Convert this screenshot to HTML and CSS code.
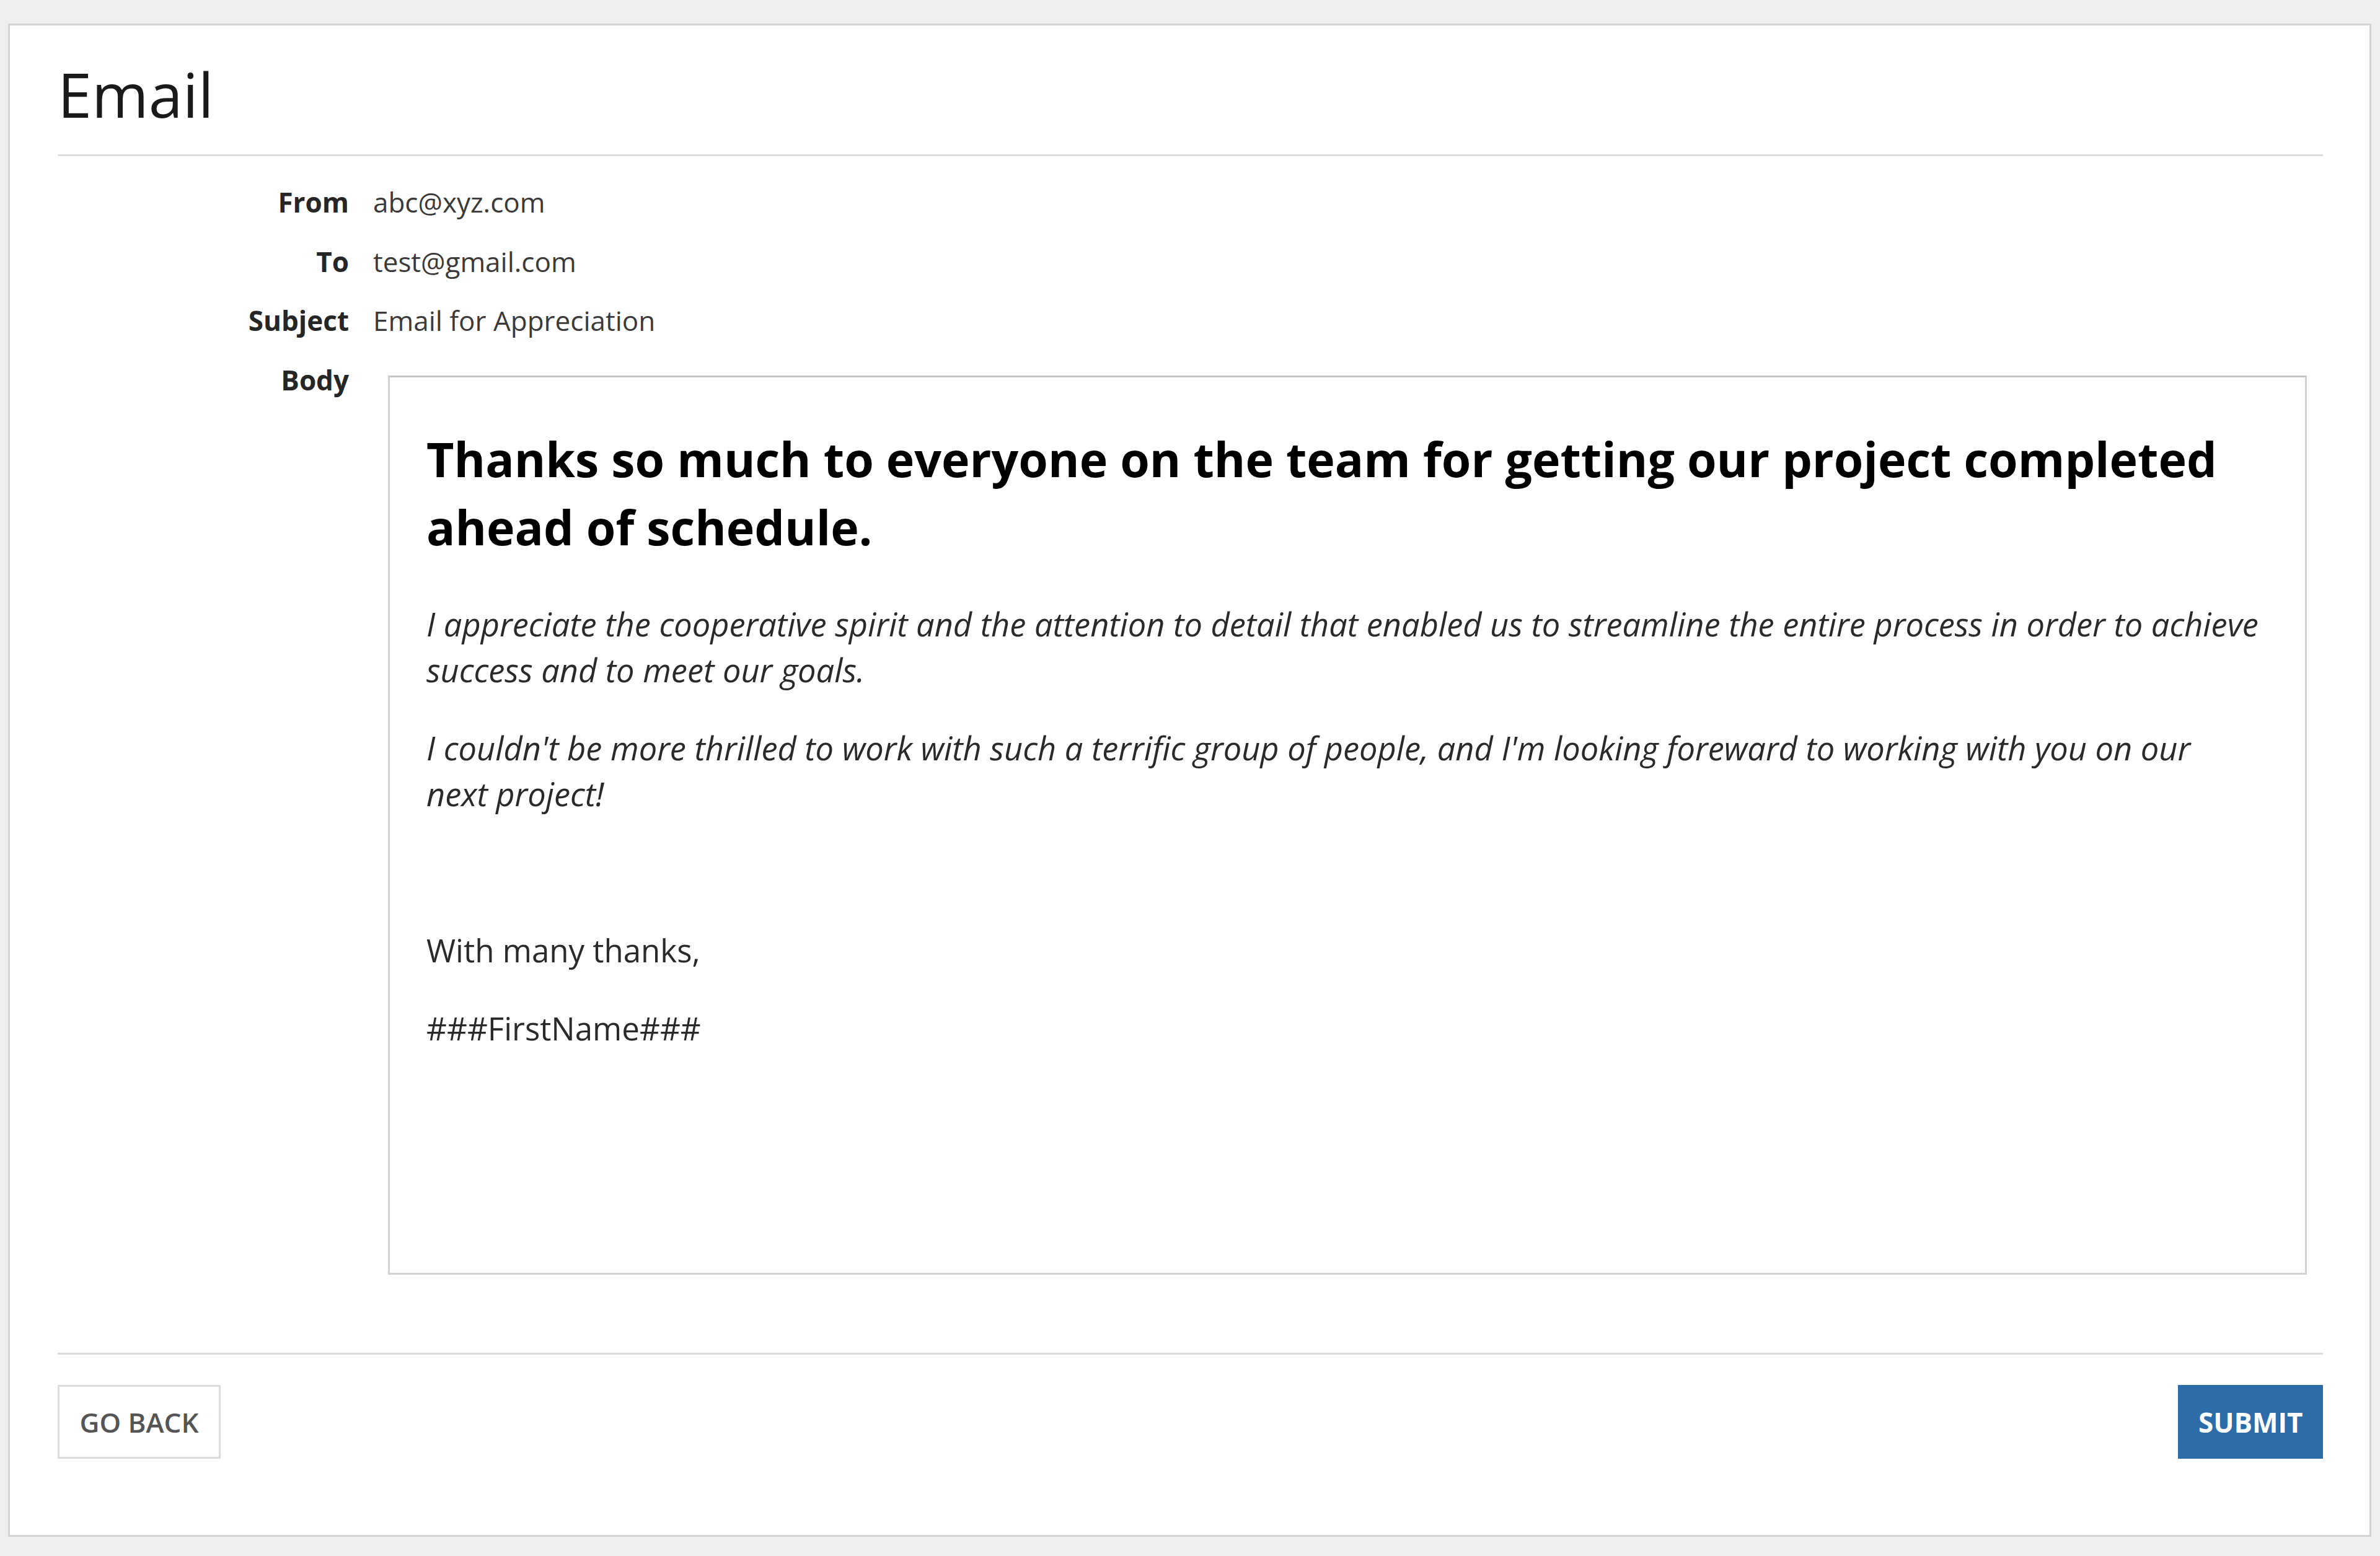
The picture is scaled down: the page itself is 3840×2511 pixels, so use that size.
FILE: index.html
```html
<!DOCTYPE html>
<html lang="en">
<head>
<meta charset="utf-8">
<title>Email</title>
<link rel="stylesheet" href="styles.css">
</head>
<body>
<main class="card">
  <header class="card-header">
    <h1 class="title">Email</h1>
  </header>
  <section class="form">
    <div class="row">
      <div class="label">From</div>
      <div class="value">abc@xyz.com</div>
    </div>
    <div class="row">
      <div class="label">To</div>
      <div class="value">test@gmail.com</div>
    </div>
    <div class="row">
      <div class="label">Subject</div>
      <div class="value">Email for Appreciation</div>
    </div>
    <div class="row row-body">
      <div class="label">Body</div>
      <div class="editor">
        <h2 class="mail-heading">Thanks so much to everyone on the team for getting our project completed ahead of schedule.</h2>
        <p class="mail-em">I appreciate the cooperative spirit and the attention to detail that enabled us to streamline the entire process in order to achieve success and to meet our goals.</p>
        <p class="mail-em">I couldn't be more thrilled to work with such a terrific group of people, and I'm looking foreward to working with you on our next&nbsp;project!</p>
        <p class="mail-p">&nbsp;</p>
        <p class="mail-p">With many thanks,</p>
        <p class="mail-p">###FirstName###</p>
      </div>
    </div>
  </section>
  <footer class="card-footer">
    <button class="btn btn-default" type="button">GO BACK</button>
    <button class="btn btn-primary" type="button">SUBMIT</button>
  </footer>
</main>
</body>
</html>
```

FILE: styles.css
```css
* { box-sizing: border-box; }

html, body {
  margin: 0;
  padding: 0;
}

body {
  background: #efefef;
  padding: 38px 14px 30px 13px;
  font-family: "Open Sans", "Noto Sans", "Liberation Sans", sans-serif;
  color: #333;
}

.card {
  display: block;
  background: #fff;
  border: 3px solid #d3d3d3;
  padding: 45px 75px 123px 77px;
}

.card-header {
  border-bottom: 3px solid #dedede;
  padding-bottom: 31px;
}

.title {
  margin: 0;
  font-size: 99px;
  font-weight: 500;
  line-height: 132px;
  color: #1a1a1a;
}

.form {
  margin-top: 27px;
}

.row {
  display: grid;
  grid-template-columns: 470px 1fr;
  column-gap: 39px;
  font-size: 44px;
  line-height: 95.5px;
}

.label {
  text-align: right;
  font-weight: 700;
  color: #262626;
}

.value {
  color: #3a3a3a;
}

.row-body .editor {
  margin: 40.5px 26px 0 24px;
  height: 1451px;
  border: 3px solid #d2d2d2;
  border-top-color: #c6c6c6;
  padding: 77px 59px 0 59px;
  line-height: normal;
  overflow: hidden;
}

.mail-heading {
  margin: 0 0 64px 0;
  font-size: 77px;
  font-weight: 700;
  line-height: 110px;
  color: #000;
}

.mail-em,
.mail-p {
  margin: 0 0 53px 0;
  font-size: 52.4px;
  line-height: 73.5px;
  color: #2a2a2a;
}

.mail-em {
  font-style: italic;
}

.mail-p {
  font-size: 51px;
}

.card-footer {
  margin-top: 126px;
  border-top: 3px solid #dadada;
  padding-top: 49px;
  display: flex;
  justify-content: space-between;
  align-items: center;
}

.btn {
  height: 119px;
  font-family: "Open Sans", "Noto Sans", "Liberation Sans", sans-serif;
  font-size: 44px;
  font-weight: 600;
  padding: 0 30px;
  border-radius: 0;
  cursor: pointer;
}

.btn-default {
  width: 263px;
  background: #fff;
  color: #555;
  border: 3px solid #dcdcdc;
}

.btn-primary {
  width: 234px;
  background: #2b6ca9;
  color: #fff;
  border: 3px solid #2b6ca9;
  font-weight: 700;
}
```
